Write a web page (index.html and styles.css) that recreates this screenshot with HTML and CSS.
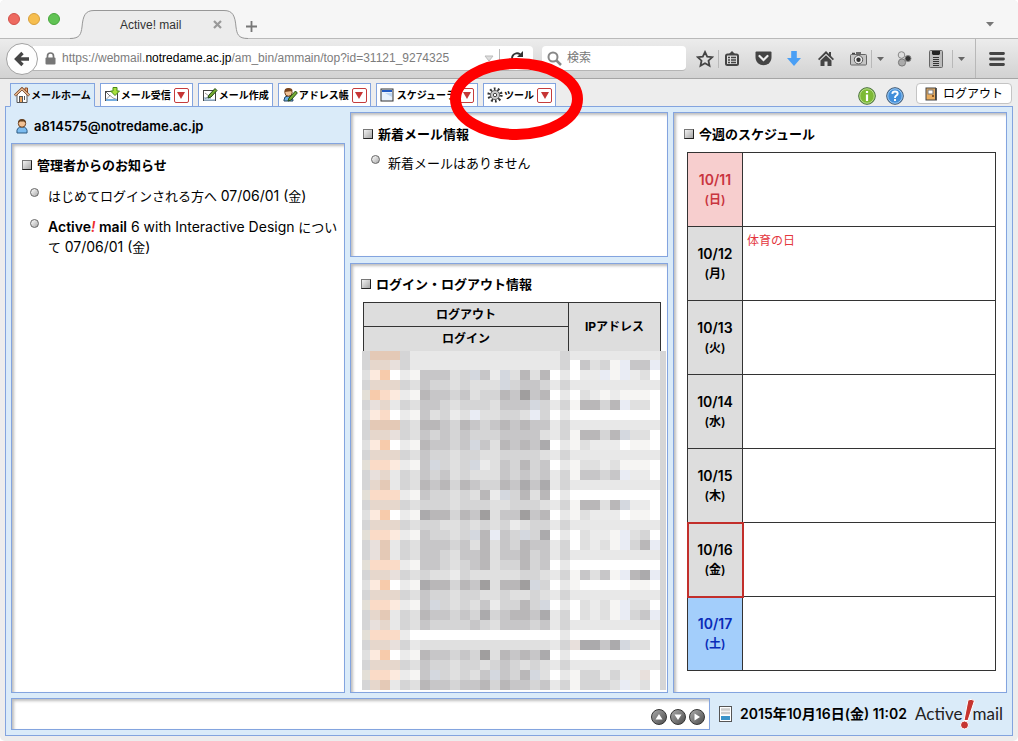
FILE: index.html
```html
<!DOCTYPE html>
<html lang="ja">
<head>
<meta charset="utf-8">
<title>Active! mail</title>
<link rel="stylesheet" href="styles.css">
</head>
<body>
<div class="window">
  <header class="titlebar">
    <div class="lights">
      <button class="light light-close" aria-label="閉じる"></button>
      <button class="light light-min" aria-label="しまう"></button>
      <button class="light light-max" aria-label="拡大"></button>
    </div>
    <div class="browser-tab">
      <svg class="tab-shape" viewBox="0 0 178 30" width="178" height="30" aria-hidden="true"><path d="M0 28.500C10 28.500 11 24 12 17C13 6 15 .5 24 .5H154C163 .5 165 6 166 17C167 24 168 28.500 178 28.500V30H0Z" fill="#ececec"/><path d="M0 28.500C10 28.500 11 24 12 17C13 6 15 .5 24 .5H154C163 .5 165 6 166 17C167 24 168 28.500 178 28.500" fill="none" stroke="#979797"/></svg>
      <span class="tab-title">Active! mail</span>
      <button class="plain tab-close" aria-label="タブを閉じる"><svg width="9" height="9" viewBox="0 0 9 9"><path d="M1 1L8 8M8 1L1 8" stroke="#999" stroke-width="2.200"/></svg></button>
    </div>
    <button class="plain new-tab" aria-label="新しいタブ"><svg width="11" height="11" viewBox="0 0 11 11"><path d="M5.500 0V11M0 5.500H11" stroke="#777" stroke-width="1.800"/></svg></button>
    <button class="plain all-tabs" aria-label="タブ一覧"><svg width="8" height="5" viewBox="0 0 8 5"><path d="M0 0H8L4 4.500Z" fill="#777"/></svg></button>
  </header>

  <div class="toolbar">
    <button class="back" aria-label="戻る"><svg width="16" height="16" viewBox="0 0 16 16"><path d="M8.500 2L2.500 8L8.500 14M3 8H15" fill="none" stroke="#444" stroke-width="3.400"/></svg></button>
    <div class="url">
      <svg width="11" height="13" viewBox="0 0 11 13"><path d="M2.500 6V4a3 3 0 0 1 6 0V6" fill="none" stroke="#777" stroke-width="1.700"/><rect x=".5" y="5.500" width="10" height="7" rx="1" fill="#777"/></svg>
      <div class="address" role="textbox" aria-label="アドレス">https://webmail.<span class="domain">notredame.ac.jp</span>/am_bin/ammain/top?id=31121_9274325</div>
      <svg class="url-drop" width="10" height="7" viewBox="0 0 10 7"><path d="M1 1H9L5 6Z" fill="#ddd" stroke="#bbb"/></svg>
      <i class="sep sep-url"></i>
      <button class="plain reload" aria-label="再読み込み"><svg width="14" height="14" viewBox="0 0 14 14"><path d="M11.500 9.500A5 5 0 1 1 10 3.300" fill="none" stroke="#333" stroke-width="2"/><path d="M13 0V6H7Z" fill="#333"/></svg></button>
    </div>
    <label class="search">
      <svg width="15" height="15" viewBox="0 0 15 15"><circle cx="6" cy="6" r="4.500" fill="none" stroke="#888" stroke-width="2"/><path d="M9 9L14 14" stroke="#888" stroke-width="2.500"/></svg>
      <input type="text" placeholder="検索" aria-label="検索">
    </label>
    <button class="plain tool w26 tool-first" aria-label="ブックマーク"><svg width="18" height="18" viewBox="0 0 18 18"><path d="M9 2L11.200 6.600L16.200 7.200L12.500 10.700L13.500 15.800L9 13.300L4.500 15.800L5.500 10.700L1.800 7.200L6.800 6.600Z" fill="none" stroke="#444" stroke-width="1.800"/></svg></button>
    <i class="sep"></i>
    <button class="plain tool w26" aria-label="一覧"><svg width="16" height="16" viewBox="0 0 16 16"><rect x="2" y="3.500" width="12" height="10.500" rx="1.500" fill="none" stroke="#444" stroke-width="2"/><path d="M5 3L8 0L11 3Z" fill="#444"/><path d="M4 6.500H6M7 6.500H12M4 9H6M7 9H12M4 11.500H6M7 11.500H12" stroke="#444" stroke-width="1.300"/></svg></button>
    <button class="plain tool w36" aria-label="Pocket"><svg width="17" height="15" viewBox="0 0 17 15"><path d="M1.500 .5H15.500Q16.500 .5 16.500 1.500V6C16.500 17 .5 17 .5 6V1.500Q.5 .5 1.500 .5Z" fill="#444"/><path d="M4.500 5L8.500 9L12.500 5" fill="none" stroke="#eee" stroke-width="2.200" stroke-linecap="round"/></svg></button>
    <button class="plain tool w26" aria-label="ダウンロード"><svg width="14" height="15" viewBox="0 0 14 15"><path d="M4.200 0H9.800V7H14L7 15L0 7H4.200Z" fill="#4a9ff5"/></svg></button>
    <button class="plain tool w38" aria-label="ホーム"><svg width="16" height="15" viewBox="0 0 16 15"><path d="M8 0L0 8L1.200 9.200L8 2.800L14.800 9.200L16 8L13 5V1H11V3Z" fill="#444"/><path d="M8 4.300L2.500 9.500V15H6.500V10.500H9.500V15H13.500V9.500Z" fill="#444"/></svg></button>
    <button class="plain tool w26" aria-label="撮影"><svg width="17" height="14" viewBox="0 0 17 14"><path d="M2 1.500H5M6 1H11" stroke="#444" stroke-width="1.500"/><rect x=".5" y="2.500" width="16" height="10.500" rx="1" fill="#c5c5c5" stroke="#666"/><circle cx="8.500" cy="7.700" r="4.200" fill="#eee" stroke="#555"/><circle cx="8.500" cy="7.700" r="2.200" fill="#333"/></svg></button>
    <i class="sep"></i>
    <button class="plain tool w16" aria-label="撮影メニュー"><svg width="7" height="4" viewBox="0 0 7 4"><path d="M0 0H7L3.500 4Z" fill="#666"/></svg></button>
    <button class="plain tool w32" aria-label="アドオン"><svg width="15" height="16" viewBox="0 0 15 16"><circle cx="4.500" cy="4" r="3.300" fill="#ddd" stroke="#888"/><circle cx="5" cy="11.500" r="3.600" fill="#aaa" stroke="#777"/><circle cx="11" cy="7.500" r="3" fill="#333" stroke="#888"/></svg></button>
    <button class="plain tool w32" aria-label="一覧表示"><svg width="14" height="18" viewBox="0 0 14 18"><rect x=".5" y=".5" width="13" height="17" rx="1" fill="#bbb" stroke="#666"/><path d="M3 1H11V4L10 5H4L3 4Z" fill="#222"/><path d="M4 7.500H10M4 9.500H10M4 11.500H10M4 13.500H10M4 15.500H10" stroke="#333"/></svg></button>
    <i class="sep"></i>
    <button class="plain tool w16" aria-label="一覧メニュー"><svg width="7" height="4" viewBox="0 0 7 4"><path d="M0 0H7L3.500 4Z" fill="#666"/></svg></button>
    <i class="sep sep-full"></i>
    <button class="plain tool w42" aria-label="メニュー"><svg width="16" height="14" viewBox="0 0 16 14"><path d="M1.500 1.500H14.500M1.500 7H14.500M1.500 12.500H14.500" stroke="#444" stroke-width="2.800" stroke-linecap="round"/></svg></button>
  </div>

  <div class="app">
    <nav class="tabs">
      <div class="tab tab-active"><a href="#home"><svg width="16" height="16" viewBox="0 0 16 16"><path d="M11 1H13.500V6H11Z" fill="#f3b07c" stroke="#8b4a20"/><path d="M3 8V15.500H13V8L8 3Z" fill="#fff" stroke="#555"/><path d="M.8 8.500L8 1.500L15.200 8.500" fill="none" stroke="#7c4a2a" stroke-width="2.600"/><path d="M1.200 8.200L8 1.800L14.800 8.200" fill="none" stroke="#f5c59b" stroke-width="1.200"/><rect x="5.500" y="9.500" width="3" height="6" fill="#eda55e" stroke="#555"/><path d="M10.500 9V13" stroke="#555"/></svg>メールホーム</a></div>
      <div class="tab"><a href="#inbox"><svg width="16" height="16" viewBox="0 0 16 16"><rect x="1.500" y="4.500" width="12" height="9" fill="#fff" stroke="#444"/><path d="M2 12.500L6 8.500L9 11L13 12.500" fill="none" stroke="#999"/><path d="M2 13H13" stroke="#77aee0" stroke-width="2"/><path d="M2 5L6 9" stroke="#777"/><path d="M9 .5H13V4H15.500L11 8.500L6.500 4H9Z" fill="#a9e03b" stroke="#488b18"/></svg>メール受信</a><button class="drop" aria-label="受信メニュー"></button></div>
      <div class="tab"><a href="#compose"><svg width="16" height="16" viewBox="0 0 16 16"><rect x="1.500" y="3.500" width="12" height="10" fill="#fff" stroke="#444"/><path d="M2 13H13M2 11H9" stroke="#9cbcd8" stroke-width="1.500"/><path d="M3 6L7 9L3 12" fill="none" stroke="#999"/><path d="M6 11L7 8L13 1.500L15 3.500L9 10Z" fill="#75aa32" stroke="#254d15"/></svg>メール作成</a></div>
      <div class="tab"><a href="#address"><svg width="16" height="16" viewBox="0 0 16 16"><path d="M2 13Q2 9 6 9Q11 9 11 14H2Z" fill="#6fb1e8" stroke="#23415d"/><circle cx="6.500" cy="5.500" r="3.700" fill="#f2c295" stroke="#70421f"/><path d="M2.500 5Q2 1 6.500 1Q10.500 1 10.500 4Z" fill="#79441d"/><path d="M6 14L7 11L13.500 4L15.300 6L9 13Z" fill="#75aa32" stroke="#254d15"/></svg>アドレス帳</a><button class="drop" aria-label="アドレス帳メニュー"></button></div>
      <div class="tab tab-schedule"><a href="#schedule"><svg width="14" height="14" viewBox="0 0 14 14"><rect x="1" y="1" width="12" height="12" fill="#e9f2fd" stroke="#333"/><path d="M2 2H12V4H2Z" fill="#245bc1"/><path d="M5 5H12V9Z" fill="#bcd6f4"/></svg>スケジューラ</a><button class="drop" aria-label="スケジューラメニュー"></button></div>
      <div class="tab"><a href="#tools"><svg width="16" height="16" viewBox="0 0 16 16"><circle cx="8" cy="8" r="6" fill="none" stroke="#333" stroke-width="3.200" stroke-dasharray="1.700 2.070"/><circle cx="8" cy="8" r="4.500" fill="#ccc" stroke="#666"/><circle cx="8" cy="8" r="1.700" fill="#fff" stroke="#444"/></svg>ツール</a><button class="drop" aria-label="ツールメニュー"></button>
        <svg class="marker" width="133" height="82" viewBox="0 0 133 82" aria-hidden="true"><ellipse cx="66.500" cy="41" rx="61" ry="35.500" fill="none" stroke="#f00" stroke-width="11"/></svg>
      </div>
      <div class="tab-actions">
        <button class="plain round" aria-label="情報"><svg width="18" height="18" viewBox="0 0 18 18"><circle cx="9" cy="9" r="8.300" fill="#7dba35" stroke="#456c3c"/><circle cx="9" cy="9" r="7.200" fill="none" stroke="#b8dc8c"/><path d="M9 4V6M9 7.500V14" stroke="#fff" stroke-width="2.200"/></svg></button>
        <button class="plain round" aria-label="ヘルプ"><svg width="18" height="18" viewBox="0 0 18 18"><circle cx="9" cy="9" r="8.300" fill="#438fda" stroke="#44576c"/><circle cx="9" cy="9" r="7.200" fill="none" stroke="#9cc8f0"/><path d="M6.300 6.800Q6.500 4.500 9 4.500Q11.700 4.500 11.700 6.800Q11.700 8 10 8.800Q9 9.400 9 11M9 12V14" fill="none" stroke="#fff" stroke-width="1.900"/></svg></button>
        <button class="logout"><svg width="12" height="14" viewBox="0 0 12 14"><rect x="1" y="1" width="9.500" height="12" fill="#e9ad5f" stroke="#444"/><rect x="3" y="3" width="5" height="4" fill="#fff" stroke="#777"/><circle cx="8" cy="9" r="1" fill="#6d3d10"/><path d="M11.500 1V13.500" stroke="#555"/></svg>ログアウト</button>
      </div>
    </nav>

    <div class="frame">
      <main class="columns">
        <section class="column">
          <p class="user"><svg width="12" height="16" viewBox="0 0 12 16"><path d="M1 15Q0 9 6 9Q12 9 11 15Z" fill="#7cbcf0" stroke="#2d5a80"/><circle cx="6" cy="5.500" r="3.700" fill="#f2c295" stroke="#70421f"/><path d="M2 5Q2 1 6 1Q10 1 10 5L8 3.500H4Z" fill="#65401f"/></svg>a814575@notredame.ac.jp</p>
          <div class="panel grow">
            <h2>管理者からのお知らせ</h2>
            <ul class="notices">
              <li>はじめてログインされる方へ <span class="latin">07/06/01 (</span>金<span class="latin">)</span></li>
              <li><span class="latin"><b>Active<em>!</em> mail</b> 6 with Interactive Design</span> について <span class="latin">07/06/01 (</span>金<span class="latin">)</span></li>
            </ul>
          </div>
        </section>
        <section class="column column-mid">
          <div class="panel panel-new">
            <h2>新着メール情報</h2>
            <ul class="notices"><li>新着メールはありません</li></ul>
          </div>
          <div class="panel grow panel-log">
            <h2>ログイン・ログアウト情報</h2>
            <table class="log">
              <thead>
                <tr><th class="log-time">ログアウト</th><th rowspan="2">IPアドレス</th></tr>
                <tr><th>ログイン</th></tr>
              </thead>
            </table>
            <svg class="mosaic" id="mosaic" viewBox="0 0 304 339" width="304" height="339" shape-rendering="crispEdges" role="img" aria-label="ログイン履歴"></svg>
          </div>
        </section>
        <section class="column">
          <div class="panel grow panel-week">
            <h2>今週のスケジュール</h2>
            <table class="week">
              <tr><th class="sun">10/11<br><small>(日)</small></th><td></td></tr>
              <tr><th>10/12<br><small>(月)</small></th><td>体育の日</td></tr>
              <tr><th>10/13<br><small>(火)</small></th><td></td></tr>
              <tr><th>10/14<br><small>(水)</small></th><td></td></tr>
              <tr><th>10/15<br><small>(木)</small></th><td></td></tr>
              <tr><th class="today">10/16<br><small>(金)</small></th><td></td></tr>
              <tr><th class="sat">10/17<br><small>(土)</small></th><td></td></tr>
            </table>
          </div>
        </section>
      </main>
      <footer class="status">
        <div class="message">
          <button class="plain nav" aria-label="上へ"><svg width="8" height="8" viewBox="0 0 8 8"><path d="M4 1L7.500 6.500H.5Z" fill="#fff"/></svg></button>
          <button class="plain nav" aria-label="下へ"><svg width="8" height="8" viewBox="0 0 8 8"><path d="M4 7L7.500 1.500H.5Z" fill="#fff"/></svg></button>
          <button class="plain nav" aria-label="次へ"><svg width="8" height="8" viewBox="0 0 8 8"><path d="M7 4L1.500 7.500V.5Z" fill="#fff"/></svg></button>
        </div>
        <div class="clock">
          <svg width="13" height="16" viewBox="0 0 13 16"><rect x=".5" y=".5" width="12" height="15" fill="#fff" stroke="#555"/><path d="M2 3.500H11M2 7H11" stroke="#ccc" stroke-width="2.500"/><path d="M2 10H11V14H2Z" fill="#3b93c9"/></svg>
          <time class="latin" datetime="2015-10-16T11:02">2015年10月16日(金) 11:02</time>
          <span class="logo">Active<svg width="15" height="31" viewBox="0 0 15 31" aria-label="!"><path d="M8 1Q11 -.5 14.500 1.500L8 21.500H4Z" fill="#c63530" stroke="#fff"/><circle cx="4.500" cy="26" r="4" fill="#c63530" stroke="#fff"/></svg>mail</span>
        </div>
      </footer>
    </div>
  </div>
</div>
<script src="mosaic.js"></script>
</body>
</html>
```
FILE: styles.css
```css
*, *::before { box-sizing: border-box; }
body { margin: 0; background: #fff; color: #000; font: 13px/20px Inter, "Noto Sans CJK JP", sans-serif; }
svg { display: block; flex: none; }
button, input { font: inherit; color: inherit; }
h2, p, ul { margin: 0; padding: 0; }
.plain { display: flex; align-items: center; justify-content: center; padding: 0; border: 0; background: none; }
.latin { font-size: 14px; }
.window { display: flex; flex-direction: column; min-height: 100vh; background: #ededed; border-radius: 5px; overflow: hidden; }

.titlebar { display: flex; height: 39px; background: #f6f6f6; border-bottom: 1px solid #b9b9b9; }
.lights { display: flex; gap: 8px; width: 70px; padding: 13px 0 0 8px; }
.light { width: 12px; height: 12px; padding: 0; border-radius: 50%; border: 1px solid; }
.light-close { background: #ee6a60; border-color: #d2504a; }
.light-min { background: #f6be4f; border-color: #d8a03b; }
.light-max { background: #61c354; border-color: #47a63d; }
.browser-tab { position: relative; display: flex; align-items: center; justify-content: space-between; width: 178px; height: 29px; margin-top: 10px; padding: 0 26px 0 50px; font: 12px "Liberation Sans", sans-serif; color: #333; }
.tab-shape { position: absolute; left: 0; top: 0; }
.tab-title, .tab-close { position: relative; }
.new-tab { width: 11px; margin: 14px 0 0 -2px; }
.all-tabs { width: 20px; margin: 10px 18px 0 auto; }

.toolbar { display: flex; align-items: center; height: 40px; padding-left: 6px; background: linear-gradient(#ececec, #d2d2d2); border-bottom: 1px solid #a5a5a5; }
.back { position: relative; display: flex; align-items: center; justify-content: center; width: 32px; height: 32px; padding: 0; border: 1px solid #a2a2a2; border-radius: 50%; background: #fdfdfd; }
.url { display: flex; flex: 1; min-width: 0; align-items: center; height: 25px; margin-left: -5px; padding: 0 9px 0 12px; background: #fff; border-bottom: 1px solid #b5b5b5; border-radius: 0 4px 4px 0; }
.address { flex: 1; min-width: 0; margin-left: 6px; overflow: hidden; white-space: nowrap; color: #7c7c7c; font: 12px/20px "Liberation Sans", sans-serif; }
.domain { color: #000; }
.url-drop { margin-right: 5px; }
.sep { width: 1px; height: 18px; background: #b8b8b8; }
.sep-url { margin-right: 10px; }
.sep-full { height: 39px; margin-left: 6px; }
.search { display: flex; align-items: center; width: 144px; height: 25px; margin-left: 9px; padding-left: 5px; background: #fff; border-bottom: 1px solid #b5b5b5; border-radius: 4px; }
.search input { width: 110px; margin-left: 5px; padding: 0; border: 0; background: none; font-size: 12px; }
.search input::placeholder { color: #777; }
.tool { height: 30px; flex: none; }
.tool-first { margin-left: 6px; }
.w16 { width: 16px; }
.w26 { width: 26px; }
.w32 { width: 32px; }
.w36 { width: 36px; }
.w38 { width: 38px; }
.w42 { width: 42px; }

.app { display: flex; flex: 1; flex-direction: column; padding: 4px 5px 5px; }
.tabs { display: flex; gap: 5px; height: 24px; padding-left: 5px; }
.tab { position: relative; display: flex; align-items: center; justify-content: space-between; gap: 3px; height: 24px; padding: 0 3px; border: 1px solid #83a4df; background: #fff; font-size: 10px; font-weight: 700; white-space: nowrap; }
.tab a { display: flex; align-items: center; gap: 1px; color: #000; text-decoration: none; }
.tab-active { z-index: 1; background: #daebf9; border-bottom-color: #daebf9; }
.tab-schedule { min-width: 102px; }
.tab-schedule a { gap: 3px; }
.drop { display: flex; align-items: center; justify-content: center; width: 15px; height: 15px; padding: 0; border: 1px solid #c53c3c; border-radius: 2px; background: #fff; }
.drop::before { content: ""; border: 4px solid transparent; border-top: 7px solid #c63535; border-bottom: 0; }
.marker { position: absolute; left: -34px; top: -26px; z-index: 3; pointer-events: none; }
.tab-actions { display: flex; align-items: flex-start; gap: 10px; margin-left: auto; margin-right: 1px; }
.round { margin-top: 4px; }
.logout { display: flex; align-items: center; justify-content: center; gap: 6px; width: 96px; height: 21px; margin-left: 2px; padding: 0; border: 1px solid #c4c4c4; border-radius: 4px; background: #fff; font-size: 12px; line-height: 18px; }

.frame { display: flex; flex: 1; flex-direction: column; gap: 5px; margin-top: -1px; padding: 5px; border: 1px solid #83a4df; background: #daebf9; }
.columns { display: grid; flex: 1; grid-template-columns: 334fr 318fr 334fr; gap: 5px; }
.column { display: flex; flex-direction: column; min-width: 0; }
.column-mid { gap: 6px; }
.user { display: flex; align-items: center; gap: 6px; height: 31px; padding: 0 0 4px 5px; font-weight: 600; }
.panel { padding: 11px 4px 0 10px; border: 1px solid #83a4df; background: #fff; box-shadow: inset 2px 2px 3px #bdbdbd; overflow: hidden; }
.grow { flex: 1; }
.panel-new { height: 145px; padding-left: 12px; }
.panel-log { padding-top: 10px; }
h2 { display: flex; align-items: center; gap: 5px; font-size: 13px; font-weight: 700; line-height: 20px; }
h2::before { content: ""; width: 10px; height: 10px; border: 1px solid #777; border-right-color: #222; border-bottom-color: #222; background: linear-gradient(135deg, #f2f2f2, #a4a4a4); }
.notices { list-style: none; }
.notices li { position: relative; margin-top: 11px; padding-left: 26px; }
.panel-new .notices li { margin-top: 9px; padding-left: 25px; }
.notices li::before { content: ""; position: absolute; left: 8px; top: 2px; width: 9px; height: 9px; border: 1px solid #666; border-radius: 50%; background: linear-gradient(135deg, #fff, #aaa); }
.notices b { font-weight: 600; }
.notices em { color: #ee2f2f; }
table { border-collapse: collapse; table-layout: fixed; }
.log { width: calc(100% - 4px); margin: 8px 0 0 2px; font-size: 12px; line-height: 18px; }
.log th { height: 24px; padding: 0; border: 1px solid #333; border-bottom: 0; background: #ddd; }
.log-time { width: 69%; }
.mosaic { margin-left: 1px; }
.week { width: calc(100% - 9px); margin: 8px 0 0 3px; font-size: 12px; line-height: 19px; }
.week th, .week td { height: 74px; padding: 0; border: 1px solid #333; }
.week th { width: 55px; background: #ddd; font-size: 14px; font-weight: 600; }
.week small { font-size: 12px; }
.week td { padding: 4px; color: #e4373e; vertical-align: top; }
.week .sun { background: #f7cece; color: #c9353f; }
.week .sat { background: #a3cefb; color: #0a2bb8; }
.week .today { outline: 2px solid #c22f2b; outline-offset: -1px; }

.status { display: flex; align-items: center; }
.message { display: flex; flex: 1; align-items: center; justify-content: flex-end; gap: 3px; height: 32px; padding: 5px 4px 0 0; border: 1px solid #83a4df; background: #fff; box-shadow: inset 2px 2px 3px #bdbdbd; }
.nav { width: 16px; height: 16px; border: 1px solid #333; border-radius: 50%; background: linear-gradient(135deg, #aaa, #4c4c4c); }
.clock { display: flex; align-items: center; gap: 8px; width: 297px; height: 32px; padding-left: 9px; font-weight: 600; white-space: nowrap; }
.logo { display: flex; align-items: center; margin-left: auto; margin-right: 4px; font: 17px/30px Lato, sans-serif; color: #222; }
.logo svg { margin: 0 -3px 0 -2px; }
```
FILE: mosaic.js
```js
const palette = {
  9: "#a09e9e", a: "#abaaac", b: "#b9b7b8", c: "#c7c6c8", d: "#d5d5d6", e: "#e0e0e0",
  f: "#ebebeb", g: "#e8e8e8", n: "#f6f5f3", w: "#ffffff", L: "#e9ecf4", B: "#d4d8df",
  P: "#f7cbab", Q: "#fadbc7", R: "#fceade", S: "#e6d7cc", T: "#e4c9b6", U: "#e8e0dc", Y: "#e3dfd7"
};
const rows = [
  "dTTTdg ggggggggggggg gdgggggggggd",
  "dSSUdg ggggggggggggg gdwcednLccLd",
  "eRPwfn cccedBcfBebeb wgwffLnLfewd",
  "dSSSde cddedeeeBdccd gdgggggggggd",
  "YPQRfn bccdceddbc9cb wgwefnfnnnwd",
  "dUSgde ccdedddecccBd gdnbbdbLeewd",
  "eRQwfn cedfeLeeddeLd wgwwwwwwwwwd",
  "dTTTde bbcdbcdcbcbcc gdgggggggggd",
  "dSSUde cdcdcdddcccce gdnbbdbBeewd",
  "eRPwfn bccdcBcebcbca wgnefffwnnwd",
  "dSSSde cddeddeedddde gdgggggggggd",
  "YQQRfn cBdedBfecdbdc wgneefennnwd",
  "dUSgde cdcedeeecdcdc gdnccdcLffwd",
  "dSTgde bcbdbcddbcaca gdgggggggggd",
  "YQQQfn cddedebfBdbeb wgwwwwwwwwwd",
  "dSSSde dddedddeeddde gdnbbebBffwd",
  "eRPwfn abbdbc9ecc9cb wgnefffwnnwd",
  "dSSSde ddeedededfedd gdgggggggggd",
  "YQQRfn cddedBbLcdBda wgweffnLedwd",
  "dUTgde cccdcebecdbcc gdwefenLdbLd",
  "dUTgde ccdeccbeccbdc gdgggggggggd",
  "YQQQfn ccdedcbeddbdc wgwwwwwwwwwd",
  "dSSUde deefdeeeeedde gdncecnLbaLd",
  "eRPwfn abbdbc9ebb9Bd wgnwwwwwnnwd",
  "dSSSde cddeddeedeede gdgggggggggd",
  "YQQRfn cBdedecfddbdB wgwefenLeewd",
  "dSTgde bccdcdadcbbca gdwefenLdcLd",
  "dUSgde cddddcdecccdc gdgggggggggd",
  "YQQQfw wwwwwwwwwwwww wgwwwwwwwwwd",
  "dSSUdg eeeeeeeeeeeee gdUaacaBeewd",
  "eRPwfn bccdcd9ebcbca wgwwwwwwwwwd",
  "dSSSde cddeddedcdede gdgggggggggd",
  "YQQRfn cBdedecBcdbBe wgnddfdffUwd",
  "dSTgde bccdccbdbccdc gdndddeLfewd"
];
const svg = document.getElementById("mosaic");
rows.forEach((row, r) => {
  const top = r ? r * 10 - 1 : 0;
  [...row.replace(/ /g, "")].forEach((key, c) => {
    const rect = document.createElementNS("http://www.w3.org/2000/svg", "rect");
    rect.setAttribute("x", c ? c * 10 - 2 : 0);
    rect.setAttribute("y", top);
    rect.setAttribute("width", c ? 10 : 8);
    rect.setAttribute("height", r ? 10 : 9);
    rect.setAttribute("fill", palette[key]);
    svg.appendChild(rect);
  });
});
```
